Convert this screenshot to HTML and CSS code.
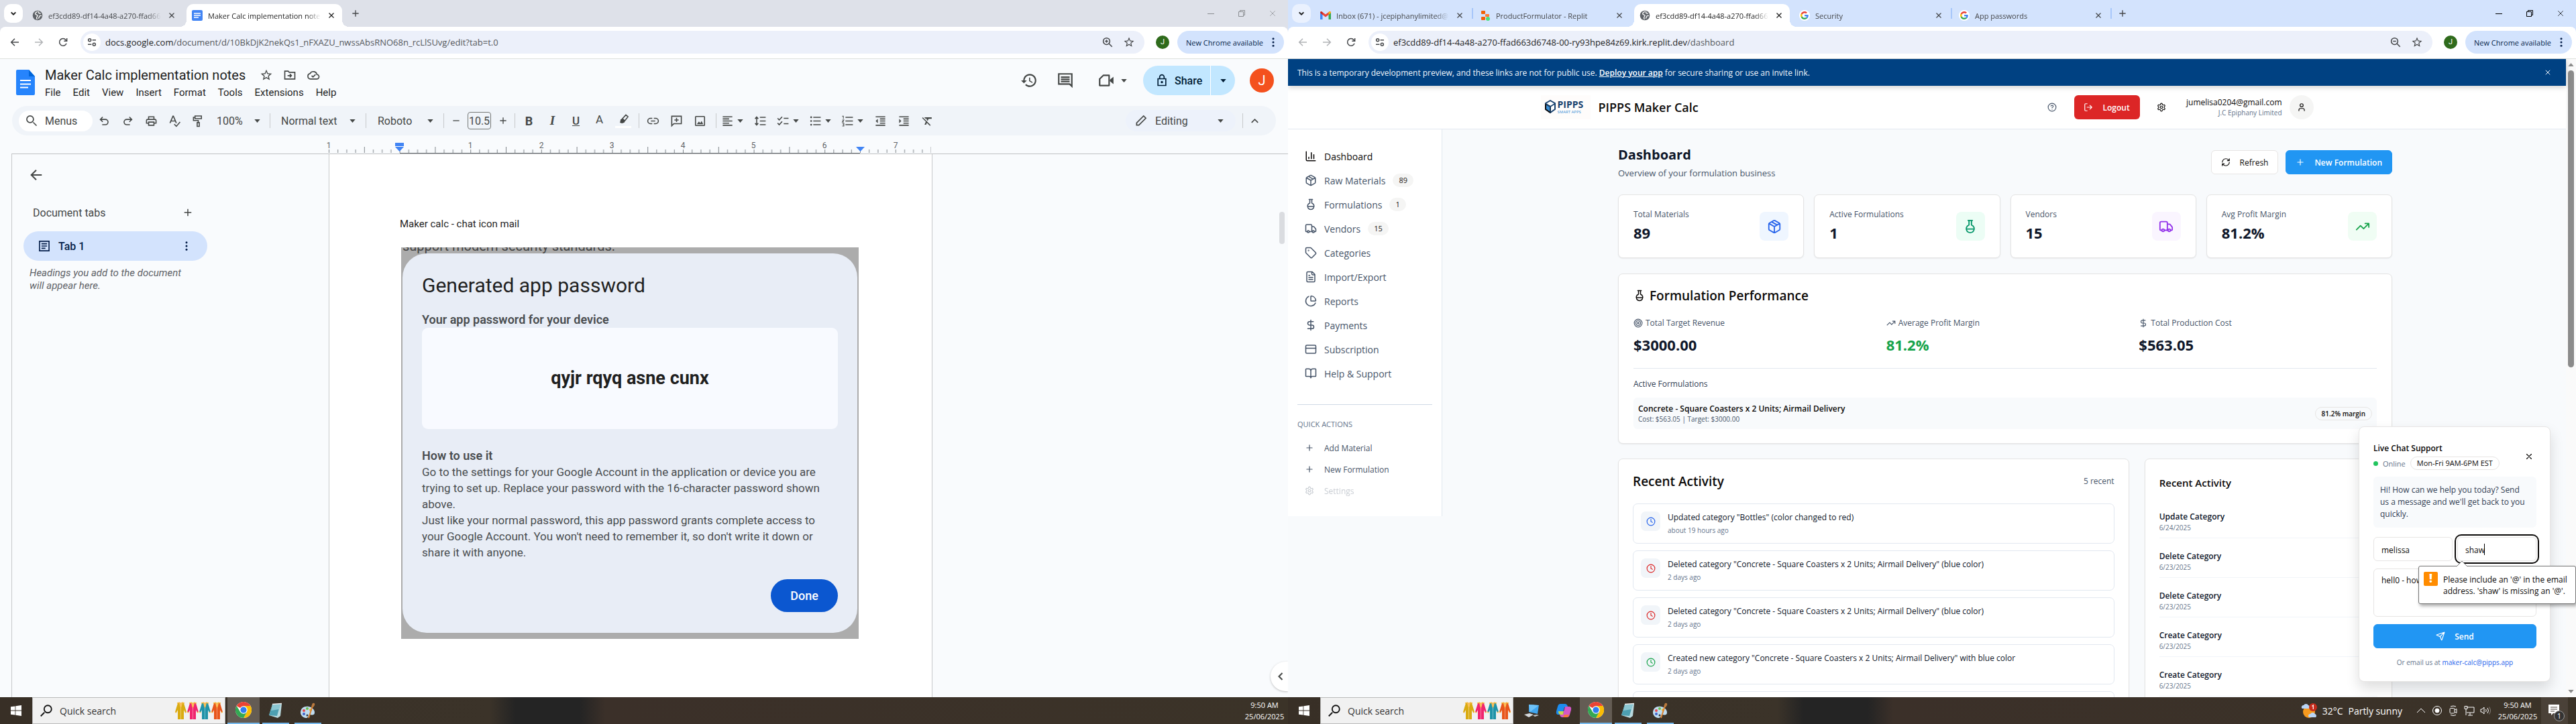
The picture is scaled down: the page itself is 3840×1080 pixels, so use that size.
FILE: index.html
```html
<!DOCTYPE html>
<html lang="en">
<head>
<meta charset="utf-8">
<title>Desktop</title>
<link rel="stylesheet" href="styles.css">
</head>
<body>
<svg class="defs" aria-hidden="true">
  <symbol id="chev-down" viewBox="0 0 24 24"><path d="M7 9.500l5 5 5-5" fill="none" stroke="currentColor" stroke-width="3"/></symbol>
  <symbol id="close" viewBox="0 0 24 24"><path d="M5 5l14 14M19 5L5 19" fill="none" stroke="currentColor" stroke-width="2.500"/></symbol>
  <symbol id="thin-x" viewBox="0 0 24 24"><path d="M3 3l18 18M21 3L3 21" fill="none" stroke="currentColor" stroke-width="1.800"/></symbol>
  <symbol id="plus" viewBox="0 0 24 24"><path d="M5 12h14M12 5v14" fill="none" stroke="currentColor" stroke-width="2"/></symbol>
  <symbol id="minus" viewBox="0 0 24 24"><path d="M5 12h14" fill="none" stroke="currentColor" stroke-width="2"/></symbol>
  <symbol id="win-min" viewBox="0 0 10 10"><path d="M0 5.500h10" stroke="currentColor"/></symbol>
  <symbol id="win-restore" viewBox="0 0 10 10"><path d="M.5 2.500h7v7h-7zM2.500 2.500v-2h7v7h-2" fill="none" stroke="currentColor"/></symbol>
  <symbol id="back" viewBox="0 0 24 24"><path d="M21 12H4M12 4l-8 8 8 8" fill="none" stroke="currentColor" stroke-width="2.200"/></symbol>
  <symbol id="forward" viewBox="0 0 24 24"><path d="M3 12h17M12 4l8 8-8 8" fill="none" stroke="currentColor" stroke-width="2.200"/></symbol>
  <symbol id="reload" viewBox="0 0 24 24"><path d="M19.500 14.500A8 8 0 1 1 18 6.700L20 9M20.500 3v6.500H14" fill="none" stroke="currentColor" stroke-width="2.300"/></symbol>
  <symbol id="site" viewBox="0 0 24 24"><g fill="none" stroke="currentColor" stroke-width="2.300"><circle cx="7" cy="7" r="3"/><path d="M13 7h8M3 17h8"/><circle cx="17" cy="17" r="3"/></g></symbol>
  <symbol id="zoom-in" viewBox="0 0 24 24"><g fill="none" stroke="currentColor" stroke-width="2"><circle cx="10" cy="10" r="6.500"/><path d="M15 15l6 6M7 10h6M10 7v6"/></g></symbol>
  <symbol id="zoom-out" viewBox="0 0 24 24"><g fill="none" stroke="currentColor" stroke-width="2"><circle cx="10" cy="10" r="6.500"/><path d="M15 15l6 6M7 10h6"/></g></symbol>
  <symbol id="star" viewBox="0 0 24 24"><path fill="currentColor" d="M22 9.240l-7.190-.62L12 2 9.190 8.630 2 9.240l5.460 4.730L5.820 21 12 17.270 18.180 21l-1.630-7.030L22 9.240zM12 15.400l-3.760 2.270 1-4.280-3.320-2.880 4.380-.38L12 6.100l1.710 4.040 4.380.38-3.320 2.880 1 4.280L12 15.400z"/></symbol>
  <symbol id="dots" viewBox="0 0 24 24"><g fill="currentColor"><circle cx="12" cy="5" r="2"/><circle cx="12" cy="12" r="2"/><circle cx="12" cy="19" r="2"/></g></symbol>
  <symbol id="globe" viewBox="0 0 24 24"><circle cx="12" cy="12" r="11" fill="#5f6368"/><path d="M12 3c-1 2-5 2-5 5s4 2 5 4-3 3-2 6l1 3M14 3l1 4 4 1M21 13c-3-1-5 0-5 2l-2 4" fill="none" stroke="#fff" stroke-width="2"/></symbol>
  <symbol id="docs-fav" viewBox="0 0 16 16"><rect width="16" height="16" rx="2" fill="#4285f4"/><path d="M3 5h10M3 8h10M3 11h7" stroke="#fff" stroke-width="1.500"/></symbol>
  <symbol id="gmail" viewBox="0 0 16 16"><path d="M0 14V3.500L3.500 6v8z" fill="#4285f4"/><path d="M16 14V3.500L12.500 6v8z" fill="#34a853"/><path d="M0 4q0-2 2-2l6 4.600L14 2q2 0 2 2L12.500 7 8 10.500 3.500 7z" fill="#ea4335"/><path d="M12.500 3.200Q16 .8 16 4l-3.500 3z" fill="#fbbc04"/><path d="M3.500 3.200Q0 .8 0 4l3.500 3z" fill="#c5221f"/></symbol>
  <symbol id="replit" viewBox="0 0 16 16"><rect x="2" y="1" width="6" height="5" rx="1" fill="#f26207"/><rect x="8" y="6" width="6" height="4" rx="1" fill="#ff7b33"/><rect x="2" y="10" width="6" height="5" rx="1" fill="#f26207"/><circle cx="12" cy="13" r="3" fill="#4ade80"/></symbol>
  <symbol id="google" viewBox="0 0 48 48"><path fill="#ea4335" d="M24 9.500c3.540 0 6.710 1.220 9.210 3.600l6.850-6.850C35.900 2.380 30.470 0 24 0 14.620 0 6.510 5.380 2.560 13.220l7.980 6.190C12.430 13.720 17.740 9.500 24 9.500z"/><path fill="#4285f4" d="M46.980 24.550c0-1.570-.15-3.090-.38-4.550H24v9.020h12.940c-.58 2.960-2.260 5.480-4.780 7.180l7.730 6c4.510-4.180 7.090-10.360 7.090-17.650z"/><path fill="#fbbc05" d="M10.530 28.590c-.48-1.450-.76-2.990-.76-4.590s.27-3.140.76-4.590l-7.980-6.190C.92 16.460 0 20.120 0 24c0 3.880.92 7.540 2.560 10.780l7.970-6.190z"/><path fill="#34a853" d="M24 48c6.480 0 11.930-2.130 15.890-5.810l-7.730-6c-2.150 1.450-4.920 2.300-8.160 2.300-6.260 0-11.570-4.220-13.470-9.910l-7.980 6.190C6.510 42.620 14.620 48 24 48z"/></symbol>

  <symbol id="docs-logo" viewBox="0 0 28 38"><path d="M2 0h17l9 10v26q0 2-2 2H2q-2 0-2-2V2q0-2 2-2z" fill="#2684fc"/><path d="M19 0l9 10h-9z" fill="#0066da"/><path d="M6 16h16M6 21.500h16M6 26.500h12" stroke="#fff" stroke-width="2.200"/></symbol>
  <symbol id="move" viewBox="0 0 24 24"><path d="M3 5h6l2 2h10v12H3zM8 13h7M12 10l3 3-3 3" fill="none" stroke="currentColor" stroke-width="2"/></symbol>
  <symbol id="cloud" viewBox="0 0 24 24"><path d="M7 19a5 5 0 0 1-.6-9.900A6.500 6.500 0 0 1 18.500 11 4 4 0 0 1 18 19zM9 13l2.500 2.500L16 11" fill="none" stroke="currentColor" stroke-width="2"/></symbol>
  <symbol id="history" viewBox="0 0 24 24"><path fill="currentColor" d="M13 3c-4.970 0-9 4.030-9 9H1l3.890 3.890.07.14L9 12H6c0-3.870 3.130-7 7-7s7 3.130 7 7-3.130 7-7 7c-1.930 0-3.680-.79-4.940-2.060l-1.420 1.420C8.270 19.990 10.510 21 13 21c4.970 0 9-4.030 9-9s-4.030-9-9-9zm-1 5v5l4.280 2.540.72-1.210-3.500-2.080V8H12z"/></symbol>
  <symbol id="comment" viewBox="0 0 24 24"><path d="M3 3h18v17l-3-3H3zM6 7.500h12M6 10.500h12M6 13.500h12" fill="none" stroke="currentColor" stroke-width="2"/></symbol>
  <symbol id="video" viewBox="0 0 24 24"><path d="M8 5h8v14H3V10z" fill="none" stroke="currentColor" stroke-width="2" stroke-linejoin="round"/><path d="M17 11l5-4v10l-5-4z" fill="currentColor"/></symbol>
  <symbol id="lock" viewBox="0 0 24 24"><path d="M5 9h14v12H5zM8 9V6a4 4 0 0 1 8 0v3" fill="none" stroke="currentColor" stroke-width="2"/><circle cx="12" cy="15" r="2" fill="currentColor"/></symbol>
  <symbol id="caret" viewBox="0 0 10 6"><path d="M0 0h10L5 6z" fill="currentColor"/></symbol>
  <symbol id="search" viewBox="0 0 24 24"><path d="M15 15l6 6" fill="none" stroke="currentColor" stroke-width="2"/><circle cx="9.500" cy="9.500" r="6" fill="none" stroke="currentColor" stroke-width="2"/></symbol>
  <symbol id="undo" viewBox="0 0 24 24"><path d="M8 19h6a5 5 0 0 0 0-10H5M9 4.500L4.500 9 9 13.500" fill="none" stroke="currentColor" stroke-width="2"/></symbol>
  <symbol id="redo" viewBox="0 0 24 24"><path d="M16 19h-6a5 5 0 0 1 0-10h9M15 4.500L19.500 9 15 13.500" fill="none" stroke="currentColor" stroke-width="2"/></symbol>
  <symbol id="print" viewBox="0 0 24 24"><path fill="currentColor" d="M19 8h-1V3H6v5H5c-1.660 0-3 1.340-3 3v6h4v4h12v-4h4v-6c0-1.660-1.340-3-3-3zM8 5h8v3H8V5zm8 14H8v-4h8v4zm2-4v-2H6v2H4v-4c0-.55.45-1 1-1h14c.55 0 1 .45 1 1v4h-2z"/></symbol>
  <symbol id="spell" viewBox="0 0 24 24"><path d="M3 16L8.500 3h1L15 16M5 12h8M11 18l4 4 7-8" fill="none" stroke="currentColor" stroke-width="2"/></symbol>
  <symbol id="paint" viewBox="0 0 24 24"><path d="M6 2.500h12v5H6zM6 5H3v6h9v4M10 15h4v7h-4z" fill="none" stroke="currentColor" stroke-width="2"/></symbol>
  <symbol id="pen" viewBox="0 0 24 24"><path d="M8 13L17 3l4 3.500-8 10zM8 13l5 3.500-3 1.500-3-1z" fill="none" stroke="currentColor" stroke-width="2"/><path d="M8 13l3-4 4 4-2 4-5 1z" fill="currentColor"/></symbol>
  <symbol id="link" viewBox="0 0 24 24"><path d="M10.500 7H7a5 5 0 0 0 0 10h3.500M13.500 7H17a5 5 0 0 1 0 10h-3.500M8 12h8" fill="none" stroke="currentColor" stroke-width="2"/></symbol>
  <symbol id="add-comment" viewBox="0 0 24 24"><path d="M3 3h18v14H7l-4 4zM8 10h8M12 6v8" fill="none" stroke="currentColor" stroke-width="2"/></symbol>
  <symbol id="image" viewBox="0 0 24 24"><rect x="3.500" y="3.500" width="17" height="17" rx="1" fill="none" stroke="currentColor" stroke-width="2"/><path d="M6 18l4-5 2.500 3 2.500-4 3 6z" fill="currentColor"/></symbol>
  <symbol id="align" viewBox="0 0 24 24"><path d="M3 4h18M3 8h12M3 12h18M3 16h12M3 20h18" stroke="currentColor" stroke-width="2"/></symbol>
  <symbol id="spacing" viewBox="0 0 24 24"><path d="M11 5h11M11 12h11M11 19h11M5 5v14M2 8l3-3.500L8 8M2 16l3 3.500L8 16" fill="none" stroke="currentColor" stroke-width="2"/></symbol>
  <symbol id="checklist" viewBox="0 0 24 24"><path d="M1.500 7l3 3L10 4M1.500 16l3 3L10 13M13 7h9M13 17h9" fill="none" stroke="currentColor" stroke-width="2"/></symbol>
  <symbol id="bullets" viewBox="0 0 24 24"><path d="M8 5h14M8 12h14M8 19h14" stroke="currentColor" stroke-width="2"/><circle cx="4" cy="5" r="1.700"/><circle cx="4" cy="12" r="1.700"/><circle cx="4" cy="19" r="1.700"/></symbol>
  <symbol id="numbers" viewBox="0 0 24 24"><path d="M8 5h14M8 12h14M8 19h14" stroke="currentColor" stroke-width="2"/><path d="M2 3h2v5M2 10h3l-3 4h3M2 16.500h3v5H2M3 19h2" fill="none" stroke="currentColor" stroke-width="1.300"/></symbol>
  <symbol id="outdent" viewBox="0 0 24 24"><path d="M3 4h18M11 8h10M11 12h10M11 16h10M3 20h18" stroke="currentColor" stroke-width="2"/><path d="M7 8v8l-4-4z"/></symbol>
  <symbol id="indent" viewBox="0 0 24 24"><path d="M3 4h18M11 8h10M11 12h10M11 16h10M3 20h18" stroke="currentColor" stroke-width="2"/><path d="M3 8v8l4-4z"/></symbol>
  <symbol id="clear" viewBox="0 0 24 24"><path fill="currentColor" d="M3.270 5L2 6.270l6.970 6.970L6.500 19h3l1.570-3.660L16.730 21 18 19.730 3.550 5.270 3.270 5zM6 5v.18L8.820 8h2.400l-.72 1.680 2.100 2.100L14.210 8H20V5H6z"/></symbol>
  <symbol id="pencil" viewBox="0 0 24 24"><path d="M4 20v-4L16.500 3.500l4 4L8 20z" fill="none" stroke="currentColor" stroke-width="2"/></symbol>
  <symbol id="chev-up" viewBox="0 0 24 24"><path d="M6 15l6-6 6 6" fill="none" stroke="currentColor" stroke-width="2"/></symbol>
  <symbol id="chev-left" viewBox="0 0 24 24"><path d="M15 6l-6 6 6 6" fill="none" stroke="currentColor" stroke-width="2.500"/></symbol>
  <symbol id="tab-doc" viewBox="0 0 24 24"><path d="M3.500 3.500h17v17h-17zM7 8h10M7 12h10M7 16h7" fill="none" stroke="currentColor" stroke-width="2"/></symbol>

  <symbol id="chart" viewBox="0 0 24 24"><path d="M3 3v16a2 2 0 0 0 2 2h16M18 17V9M13 17V5M8 17v-3"/></symbol>
  <symbol id="package" viewBox="0 0 24 24"><path d="m7.500 4.270 9 5.150M21 8a2 2 0 0 0-1-1.730l-7-4a2 2 0 0 0-2 0l-7 4A2 2 0 0 0 3 8v8a2 2 0 0 0 1 1.730l7 4a2 2 0 0 0 2 0l7-4A2 2 0 0 0 21 16ZM3.300 7l8.700 5 8.700-5M12 22V12"/></symbol>
  <symbol id="flask" viewBox="0 0 24 24"><path d="M10 2v7.310M14 9.300V2M8.500 2h7M14 9.300a6.500 6.500 0 1 1-4 0M5.520 16h12.960"/></symbol>
  <symbol id="truck" viewBox="0 0 24 24"><path d="M14 18V6a2 2 0 0 0-2-2H4a2 2 0 0 0-2 2v11a1 1 0 0 0 1 1h2M15 18H9M19 18h2a1 1 0 0 0 1-1v-3.650a1 1 0 0 0-.22-.62l-3.480-4.350A1 1 0 0 0 17.520 8H14"/><circle cx="17" cy="18" r="2"/><circle cx="7" cy="18" r="2"/></symbol>
  <symbol id="tag" viewBox="0 0 24 24"><path d="M12.590 2.590A2 2 0 0 0 11.170 2H4a2 2 0 0 0-2 2v7.170a2 2 0 0 0 .59 1.420l8.700 8.700a2.430 2.430 0 0 0 3.420 0l6.580-6.580a2.430 2.430 0 0 0 0-3.420z"/><circle cx="7.500" cy="7.500" r=".5"/></symbol>
  <symbol id="file" viewBox="0 0 24 24"><path d="M15 2H6a2 2 0 0 0-2 2v16a2 2 0 0 0 2 2h12a2 2 0 0 0 2-2V7ZM14 2v4a2 2 0 0 0 2 2h4M10 9H8M16 13H8M16 17H8"/></symbol>
  <symbol id="pie" viewBox="0 0 24 24"><path d="M21 12c.55 0 1-.45.95-1a10 10 0 0 0-8.950-8.950C12.450 2 12 2.450 12 3v8a1 1 0 0 0 1 1zM21.210 15.890A10 10 0 1 1 8 2.830"/></symbol>
  <symbol id="dollar" viewBox="0 0 24 24"><path d="M12 2v20M17 5H9.500a3.500 3.500 0 0 0 0 7h5a3.500 3.500 0 0 1 0 7H6"/></symbol>
  <symbol id="card" viewBox="0 0 24 24"><rect width="20" height="16" x="2" y="4" rx="2"/><path d="M2 10h20"/></symbol>
  <symbol id="book" viewBox="0 0 24 24"><path d="M12 7v14M3 18a1 1 0 0 1-1-1V4a1 1 0 0 1 1-1h5a4 4 0 0 1 4 4 4 4 0 0 1 4-4h5a1 1 0 0 1 1 1v13a1 1 0 0 1-1 1h-6a3 3 0 0 0-3 3 3 3 0 0 0-3-3z"/></symbol>
  <symbol id="lplus" viewBox="0 0 24 24"><path d="M5 12h14M12 5v14"/></symbol>
  <symbol id="gear" viewBox="0 0 24 24"><path d="M12.220 2h-.44a2 2 0 0 0-2 2v.18a2 2 0 0 1-1 1.730l-.43.25a2 2 0 0 1-2 0l-.15-.08a2 2 0 0 0-2.730.73l-.22.38a2 2 0 0 0 .73 2.730l.15.1a2 2 0 0 1 1 1.720v.51a2 2 0 0 1-1 1.740l-.15.09a2 2 0 0 0-.73 2.730l.22.38a2 2 0 0 0 2.730.73l.15-.08a2 2 0 0 1 2 0l.43.25a2 2 0 0 1 1 1.730V20a2 2 0 0 0 2 2h.44a2 2 0 0 0 2-2v-.18a2 2 0 0 1 1-1.730l.43-.25a2 2 0 0 1 2 0l.15.08a2 2 0 0 0 2.730-.73l.22-.39a2 2 0 0 0-.73-2.730l-.15-.08a2 2 0 0 1-1-1.740v-.5a2 2 0 0 1 1-1.740l.15-.09a2 2 0 0 0 .73-2.730l-.22-.38a2 2 0 0 0-2.730-.73l-.15.08a2 2 0 0 1-2 0l-.43-.25a2 2 0 0 1-1-1.730V4a2 2 0 0 0-2-2z"/><circle cx="12" cy="12" r="3"/></symbol>
  <symbol id="help" viewBox="0 0 24 24"><circle cx="12" cy="12" r="10"/><path d="M9.090 9a3 3 0 0 1 5.830 1c0 2-3 3-3 3M12 17h.01"/></symbol>
  <symbol id="logout" viewBox="0 0 24 24"><path d="M9 21H5a2 2 0 0 1-2-2V5a2 2 0 0 1 2-2h4M16 17l5-5-5-5M21 12H9"/></symbol>
  <symbol id="user" viewBox="0 0 24 24"><path d="M19 21v-2a4 4 0 0 0-4-4H9a4 4 0 0 0-4 4v2"/><circle cx="12" cy="7" r="4"/></symbol>
  <symbol id="refresh" viewBox="0 0 24 24"><path d="M3 12a9 9 0 0 1 9-9 9.750 9.750 0 0 1 6.740 2.740L21 8M21 3v5h-5M21 12a9 9 0 0 1-9 9 9.750 9.750 0 0 1-6.740-2.740L3 16M8 16H3v5"/></symbol>
  <symbol id="trend" viewBox="0 0 24 24"><path d="M22 7l-8.500 8.500-5-5L2 17M16 7h6v6"/></symbol>
  <symbol id="target" viewBox="0 0 24 24"><circle cx="12" cy="12" r="10"/><circle cx="12" cy="12" r="6"/><circle cx="12" cy="12" r="2"/></symbol>
  <symbol id="clock" viewBox="0 0 24 24"><circle cx="12" cy="12" r="10"/><path d="M12 6v6l4 2"/></symbol>
  <symbol id="send" viewBox="0 0 24 24"><path d="M14.540 21.690a.5.5 0 0 0 .94-.02l6.500-19a.5.5 0 0 0-.64-.64l-19 6.500a.5.5 0 0 0-.02.94l7.930 3.180a2 2 0 0 1 1.110 1.110zM21.850 2.150l-10.940 10.940"/></symbol>
  <symbol id="lx" viewBox="0 0 24 24"><path d="M18 6L6 18M6 6l12 12"/></symbol>

  <symbol id="windows" viewBox="0 0 16 16"><path fill="#fff" d="M0 2.300l6.500-.9v6.200H0zM7.300 1.300L16 0v7.600H7.300zM0 8.400h6.500v6.200L0 13.700zM7.300 8.400H16V16l-8.700-1.300z"/></symbol>
  <symbol id="coat" viewBox="0 0 17 27"><path d="M4 2l3-1h3l3 1 4 13-2 1-2-4v14H4V12l-2 4-2-1z" fill="currentColor"/><path d="M6 1h5l-1 5-1.500 4L7 6z" fill="#fbbf5a"/><path d="M8.500 9v17" stroke="#fff" stroke-opacity=".4"/><path d="M3 2l4-1M10 1l4 1M0 15l2 1M15 16l2-1" stroke="#f5b83d" stroke-width="1.500"/></symbol>
  <symbol id="chrome" viewBox="0 0 24 24"><circle cx="12" cy="12" r="12" fill="#fff"/><path d="M12 12L1.600 6A12 12 0 0 1 22.400 6z" fill="#ea4335"/><path d="M12 6h10.400A12 12 0 0 1 12 24l5-9z" fill="#fbbc04"/><path d="M1.600 6A12 12 0 0 0 12 24l5-9-5 2.500-5-3z" fill="#34a853"/><circle cx="12" cy="12" r="5.800" fill="#fff"/><circle cx="12" cy="12" r="4.600" fill="#2f7df0"/></symbol>
  <symbol id="notepad" viewBox="0 0 24 24"><path d="M7 3l14-1-2 18-4 3-13-4z" fill="#b9d9de"/><path d="M7 3l12-1-5 18-12-1z" fill="#4d9fb1"/><path d="M7 3l12-1-2 8-12 2z" fill="#8bc7d2"/><path d="M7 2.500l14-1" stroke="#eee" stroke-width="1.500"/></symbol>
  <symbol id="palette" viewBox="0 0 24 24"><path d="M1 15C1 8 7 5 13 6s9 5 9 9-4 4-6 3-3 5-7 5-8-4-8-8z" fill="#bfdcf0"/><circle cx="6" cy="12" r="2" fill="#e5484d"/><circle cx="11" cy="9" r="2" fill="#6cbf4a"/><circle cx="16" cy="11" r="2" fill="#f2b632"/><circle cx="6" cy="17" r="2" fill="#4263c9"/><circle cx="11" cy="19" r="1.500" fill="#333"/><path d="M20 2l-7 21" stroke="#d98232" stroke-width="2"/><path d="M19 1q4-1 3 3l-2 3-3-1z" fill="#b9793e"/></symbol>
  <symbol id="pc" viewBox="0 0 24 24"><path d="M8 3l15 1-2 13-13-3z" fill="#41a5ee"/><path d="M8 3l15 1-13 10z" fill="#6fc2f7"/><path d="M1 18l8-2 6 2-7 4z" fill="#d5d9dd"/><path d="M14 19l6-1 3 1-6 2z" fill="#c0c4c8"/></symbol>
  <symbol id="copilot" viewBox="0 0 24 24"><path d="M7 2h7q3 0 4 4l-5 1-3 11H4q-4 0-3-5l2-7q1-4 4-4z" fill="#1c8df0"/><path d="M17 22h-7q-3 0-4-4l5-1 3-11h6q4 0 3 5l-2 7q-1 4-4 4z" fill="#d457c8"/><path d="M4 13q0 5 4 5h3l1-5z" fill="#c7d64c"/><path d="M13 18h7q-1 4-4 4h-5z" fill="#f6743d"/></symbol>
</svg>

<div class="desktop">
  <section class="screen">
    <div class="window">
      <div class="tabstrip tabstrip-idle">
        <button class="tab-search" aria-label="Search tabs"><svg class="i12"><use href="#chev-down"/></svg></button>
        <div class="tab"><svg class="i16"><use href="#globe"/></svg><span class="tab-title">ef3cdd89-df14-4a48-a270-ffad663d</span><button class="tab-x" aria-label="Close"><svg class="i12"><use href="#close"/></svg></button></div>
        <span class="tab-gap"></span>
        <div class="tab tab-active"><svg class="i16"><use href="#docs-fav"/></svg><span class="tab-title">Maker Calc implementation notes</span><button class="tab-x" aria-label="Close"><svg class="i12"><use href="#close"/></svg></button></div>
        <button class="tab-new" aria-label="New tab"><svg class="i16"><use href="#plus"/></svg></button>
        <div class="win-ctl win-ctl-idle"><svg><use href="#win-min"/></svg><svg><use href="#win-restore"/></svg><svg><use href="#thin-x"/></svg></div>
      </div>
      <div class="navwrap tabstrip-idle"><div class="navbar">
        <button class="nav-btn" aria-label="Back"><svg class="i16"><use href="#back"/></svg></button>
        <button class="nav-btn nav-off" aria-label="Forward"><svg class="i16"><use href="#forward"/></svg></button>
        <button class="nav-btn" aria-label="Reload"><svg class="i16"><use href="#reload"/></svg></button>
        <div class="omnibox"><span class="site"><svg class="i16"><use href="#site"/></svg></span><span class="url">docs.google.com<span class="dim">/document/d/10BkDjK2nekQs1_nFXAZU_nwssAbsRNO68n_rcLlSUvg/edit?tab=t.0</span></span><svg class="i18"><use href="#zoom-in"/></svg><svg class="i18"><use href="#star"/></svg></div>
        <span class="avatar-s">J</span>
        <button class="update">New Chrome available<svg class="i18"><use href="#dots"/></svg></button>
      </div></div>

      <div class="docs">
        <header class="docs-head">
          <svg class="docs-logo"><use href="#docs-logo"/></svg>
          <div class="docs-titles">
            <div class="docs-title"><span>Maker Calc implementation notes</span><svg class="i20"><use href="#star"/></svg><svg class="i20"><use href="#move"/></svg><svg class="i20"><use href="#cloud"/></svg></div>
            <nav class="docs-menu"><button>File</button><button>Edit</button><button>View</button><button>Insert</button><button>Format</button><button>Tools</button><button>Extensions</button><button>Help</button></nav>
          </div>
          <div class="docs-actions">
            <button aria-label="History"><svg class="i26"><use href="#history"/></svg></button>
            <button aria-label="Comments"><svg class="i26"><use href="#comment"/></svg></button>
            <button class="meet" aria-label="Meet"><svg class="i26"><use href="#video"/></svg><svg class="caret"><use href="#caret"/></svg></button>
            <div class="share"><button class="share-main"><svg class="i20"><use href="#lock"/></svg>Share</button><button class="share-more" aria-label="Share options"><svg class="caret"><use href="#caret"/></svg></button></div>
            <span class="avatar-l">J</span>
          </div>
        </header>
        <div class="tools">
          <button class="menus"><svg class="i20"><use href="#search"/></svg>Menus</button>
          <button class="tool" aria-label="Undo"><svg><use href="#undo"/></svg></button>
          <button class="tool" aria-label="Redo"><svg><use href="#redo"/></svg></button>
          <button class="tool" aria-label="Print"><svg><use href="#print"/></svg></button>
          <button class="tool" aria-label="Spelling"><svg><use href="#spell"/></svg></button>
          <button class="tool" aria-label="Paint format"><svg><use href="#paint"/></svg></button>
          <button class="pick pick-zoom">100%<svg class="caret"><use href="#caret"/></svg></button>
          <i class="sep"></i>
          <button class="pick pick-style">Normal text<svg class="caret"><use href="#caret"/></svg></button>
          <i class="sep"></i>
          <button class="pick pick-font">Roboto<svg class="caret"><use href="#caret"/></svg></button>
          <i class="sep"></i>
          <button class="tool" aria-label="Smaller"><svg class="i16"><use href="#minus"/></svg></button>
          <input class="size" value="10.5" aria-label="Font size">
          <button class="tool" aria-label="Larger"><svg class="i16"><use href="#plus"/></svg></button>
          <i class="sep"></i>
          <div class="group">
            <button class="tool t-b">B</button><button class="tool t-i">I</button><button class="tool t-u">U</button><button class="tool t-a">A</button><button class="tool t-pen" aria-label="Highlight"><svg><use href="#pen"/></svg></button>
          </div>
          <i class="sep"></i>
          <div class="group">
            <button class="tool" aria-label="Link"><svg><use href="#link"/></svg></button><button class="tool" aria-label="Comment"><svg><use href="#add-comment"/></svg></button><button class="tool" aria-label="Image"><svg><use href="#image"/></svg></button>
          </div>
          <i class="sep"></i>
          <button class="tool drop" aria-label="Align"><svg><use href="#align"/></svg><svg class="caret"><use href="#caret"/></svg></button>
          <button class="tool" aria-label="Line spacing"><svg><use href="#spacing"/></svg></button>
          <button class="tool drop" aria-label="Checklist"><svg><use href="#checklist"/></svg><svg class="caret"><use href="#caret"/></svg></button>
          <button class="tool drop" aria-label="Bullets"><svg><use href="#bullets"/></svg><svg class="caret"><use href="#caret"/></svg></button>
          <button class="tool drop" aria-label="Numbering"><svg><use href="#numbers"/></svg><svg class="caret"><use href="#caret"/></svg></button>
          <button class="tool" aria-label="Outdent"><svg><use href="#outdent"/></svg></button>
          <button class="tool" aria-label="Indent"><svg><use href="#indent"/></svg></button>
          <button class="tool" aria-label="Clear formatting"><svg><use href="#clear"/></svg></button>
          <button class="editing"><svg class="i20"><use href="#pencil"/></svg><span>Editing</span><svg class="caret"><use href="#caret"/></svg></button>
          <i class="sep"></i>
          <button class="tool" aria-label="Hide menus"><svg class="i20"><use href="#chev-up"/></svg></button>
        </div>

        <div class="ruler">
          <svg class="ruler-scale" viewBox="0 0 912 19">
            <defs><pattern id="inch" x="6" y="0" width="105.600" height="19" patternUnits="userSpaceOnUse"><path d="M.5 13v5M13.700 13v5M26.900 13v5M40.100 13v5M53.300 9v9M66.500 13v5M79.700 13v5M92.900 13v5" stroke="#80868b"/></pattern></defs>
            <rect x="6" width="898" height="19" fill="url(#inch)"/>
            <g class="ruler-num"><text x="6" y="11">1</text><text x="217" y="11">1</text><text x="323" y="11">2</text><text x="428" y="11">3</text><text x="534" y="11">4</text><text x="639" y="11">5</text><text x="745" y="11">6</text><text x="851" y="11">7</text></g>
            <path d="M112 18.500h686" stroke="#6b6f73"/>
            <path d="M105 3h13v5h-13zM105 9h13l-6.500 7zM792 9h13l-6.500 7z" fill="#4285f4"/>
          </svg>
        </div>
        <div class="canvas">
          <aside class="outline">
            <button class="outline-back" aria-label="Close outline"><svg class="i22"><use href="#back"/></svg></button>
            <div class="outline-head"><span>Document tabs</span><svg class="i18"><use href="#plus"/></svg></div>
            <div class="outline-tab"><svg class="i20"><use href="#tab-doc"/></svg><span>Tab 1</span><svg class="i18"><use href="#dots"/></svg></div>
            <p>Headings you add to the document will appear here.</p>
          </aside>
          <article class="page">
            <p class="page-text">Maker calc - chat icon mail</p>
            <div class="shot">
              <div class="shot-top"><span>support modern security standards.</span></div>
              <div class="pw">
                <h2>Generated app password</h2>
                <h3>Your app password for your device</h3>
                <div class="pw-box">qyjr rqyq asne cunx</div>
                <h3>How to use it</h3>
                <p>Go to the settings for your Google Account in the application or device you are<br>trying to set up. Replace your password with the 16-character password shown<br>above.</p>
                <p>Just like your normal password, this app password grants complete access to<br>your Google Account. You won't need to remember it, so don't write it down or<br>share it with anyone.</p>
                <button class="pw-done">Done</button>
              </div>
            </div>
          </article>
          <div class="side-scroll"><span class="side-thumb"></span><button class="side-toggle" aria-label="Show side panel"><svg class="i20"><use href="#chev-left"/></svg></button></div>
        </div>
      </div>
    </div>

    <footer class="taskbar">
      <button class="start" aria-label="Start"><svg class="i16"><use href="#windows"/></svg></button>
      <label class="tsearch"><svg class="i22 flip"><use href="#search"/></svg><input placeholder="Quick search" aria-label="Quick search"><span class="coats"><svg class="c1"><use href="#coat"/></svg><svg class="c2"><use href="#coat"/></svg><svg class="c3"><use href="#coat"/></svg><svg class="c4"><use href="#coat"/></svg></span></label>
      <button class="app app-on" aria-label="Chrome"><svg class="i24"><use href="#chrome"/></svg></button>
      <button class="app app-run" aria-label="Notepad"><svg class="i24"><use href="#notepad"/></svg></button>
      <button class="app app-run" aria-label="Paint"><svg class="i24"><use href="#palette"/></svg></button>
      <div class="tray"><div class="tclock"><span>9:50 AM</span><span>25/06/2025</span></div></div>
    </footer>
  </section>

  <section class="screen">
    <div class="window">
      <div class="tabstrip">
        <button class="tab-search" aria-label="Search tabs"><svg class="i12"><use href="#chev-down"/></svg></button>
        <div class="tab"><svg class="i16"><use href="#gmail"/></svg><span class="tab-title">Inbox (671) - jcepiphanylimited@gmail</span><button class="tab-x" aria-label="Close"><svg class="i12"><use href="#close"/></svg></button></div>
        <span class="tab-gap tab-sep"></span>
        <div class="tab"><svg class="i16"><use href="#replit"/></svg><span class="tab-title">ProductFormulator - Replit</span><button class="tab-x" aria-label="Close"><svg class="i12"><use href="#close"/></svg></button></div>
        <span class="tab-gap"></span>
        <div class="tab tab-active"><svg class="i16"><use href="#globe"/></svg><span class="tab-title">ef3cdd89-df14-4a48-a270-ffad663d</span><button class="tab-x" aria-label="Close"><svg class="i12"><use href="#close"/></svg></button></div>
        <span class="tab-gap"></span>
        <div class="tab"><span class="gfav"><svg><use href="#google"/></svg></span><span class="tab-title">Security</span><button class="tab-x" aria-label="Close"><svg class="i12"><use href="#close"/></svg></button></div>
        <span class="tab-gap tab-sep"></span>
        <div class="tab"><span class="gfav"><svg><use href="#google"/></svg></span><span class="tab-title">App passwords</span><button class="tab-x" aria-label="Close"><svg class="i12"><use href="#close"/></svg></button></div>
        <span class="tab-gap tab-sep"></span>
        <button class="tab-new" aria-label="New tab"><svg class="i16"><use href="#plus"/></svg></button>
        <div class="win-ctl"><svg><use href="#win-min"/></svg><svg><use href="#win-restore"/></svg><svg><use href="#thin-x"/></svg></div>
      </div>
      <div class="navwrap"><div class="navbar">
        <button class="nav-btn nav-off" aria-label="Back"><svg class="i16"><use href="#back"/></svg></button>
        <button class="nav-btn nav-off" aria-label="Forward"><svg class="i16"><use href="#forward"/></svg></button>
        <button class="nav-btn" aria-label="Reload"><svg class="i16"><use href="#reload"/></svg></button>
        <div class="omnibox"><span class="site"><svg class="i16"><use href="#site"/></svg></span><span class="url">ef3cdd89-df14-4a48-a270-ffad663d6748-00-ry93hpe84z69.kirk.replit.dev<span class="dim">/dashboard</span></span><svg class="i18"><use href="#zoom-out"/></svg><svg class="i18"><use href="#star"/></svg></div>
        <span class="avatar-s">J</span>
        <button class="update">New Chrome available<svg class="i18"><use href="#dots"/></svg></button>
      </div></div>

      <div class="viewport">
        <div class="site-body">
          <div class="banner"><span>This is a temporary development preview, and these links are not for public use. <a href="#deploy">Deploy your app</a> for secure sharing or use an invite link.</span><button aria-label="Dismiss"><svg class="i12"><use href="#lx"/></svg></button></div>
          <header class="top"><div class="top-in">
            <div class="brand">
              <svg class="brand-cube" viewBox="0 0 16 20"><path d="M8 1l7 4v9l-7 5-7-5V5z" fill="#fff" stroke="#17406d" stroke-width="2"/><path d="M1 6l7 4v9l-7-5z" fill="#3b8fd6"/><path d="M1 5.500L8 10l7-4.500M8 10v9" fill="none" stroke="#17406d" stroke-width="1.500"/></svg>
              <span class="brand-text"><b>PIPPS</b><small>SMART APPS</small></span>
            </div>
            <h1>PIPPS Maker Calc</h1>
            <button class="ghost ghost-help" aria-label="Help"><svg class="i14"><use href="#help"/></svg></button>
            <button class="logout"><svg class="i14"><use href="#logout"/></svg>Logout</button>
            <button class="ghost ghost-gear" aria-label="Settings"><svg class="i14"><use href="#gear"/></svg></button>
            <div class="who"><span>jumelisa0204@gmail.com</span><small>J.C Epiphany Limited</small></div>
            <span class="who-pic"><svg class="i14"><use href="#user"/></svg></span>
          </div></header>
          <div class="cols">
            <aside class="side">
              <nav>
                <a class="on" href="#d"><svg class="i18"><use href="#chart"/></svg>Dashboard</a>
                <a href="#r"><svg class="i18"><use href="#package"/></svg>Raw Materials<span class="pill">89</span></a>
                <a href="#f"><svg class="i18"><use href="#flask"/></svg>Formulations<span class="pill">1</span></a>
                <a href="#v"><svg class="i18"><use href="#truck"/></svg>Vendors<span class="pill">15</span></a>
                <a href="#c"><svg class="i18"><use href="#tag"/></svg>Categories</a>
                <a href="#i"><svg class="i18"><use href="#file"/></svg>Import/Export</a>
                <a href="#p"><svg class="i18"><use href="#pie"/></svg>Reports</a>
                <a href="#y"><svg class="i18"><use href="#dollar"/></svg>Payments</a>
                <a href="#s"><svg class="i18"><use href="#card"/></svg>Subscription</a>
                <a href="#h"><svg class="i18"><use href="#book"/></svg>Help &amp; Support</a>
              </nav>
              <div class="quick">
                <h2>QUICK ACTIONS</h2>
                <button><svg class="i14"><use href="#lplus"/></svg>Add Material</button>
                <button><svg class="i14"><use href="#lplus"/></svg>New Formulation</button>
                <button disabled><svg class="i14"><use href="#gear"/></svg>Settings</button>
              </div>
            </aside>
            <main class="main"><div class="main-in">
              <div class="page-head">
                <div><h2>Dashboard</h2><p>Overview of your formulation business</p></div>
                <button class="btn"><svg class="i14"><use href="#refresh"/></svg>Refresh</button>
                <button class="btn btn-primary"><svg class="i14"><use href="#lplus"/></svg>New Formulation</button>
              </div>
              <div class="stats">
                <div class="card stat"><div><span>Total Materials</span><b>89</b></div><i class="ic blue"><svg class="i22"><use href="#package"/></svg></i></div>
                <div class="card stat"><div><span>Active Formulations</span><b>1</b></div><i class="ic emerald"><svg class="i22"><use href="#flask"/></svg></i></div>
                <div class="card stat"><div><span>Vendors</span><b>15</b></div><i class="ic purple"><svg class="i22"><use href="#truck"/></svg></i></div>
                <div class="card stat"><div><span>Avg Profit Margin</span><b>81.2%</b></div><i class="ic green"><svg class="i22"><use href="#trend"/></svg></i></div>
              </div>
              <section class="card perf">
                <h3><svg class="i18"><use href="#flask"/></svg>Formulation Performance</h3>
                <div class="metrics">
                  <div><span><svg class="i14"><use href="#target"/></svg>Total Target Revenue</span><b>$3000.00</b></div>
                  <div><span><svg class="i14"><use href="#trend"/></svg>Average Profit Margin</span><b class="pos">81.2%</b></div>
                  <div><span><svg class="i14"><use href="#dollar"/></svg>Total Production Cost</span><b>$563.05</b></div>
                </div>
                <div class="active-f">
                  <h4>Active Formulations</h4>
                  <div class="frow"><div><b>Concrete - Square Coasters x 2 Units; Airmail Delivery</b><small>Cost: $563.05 | Target: $3000.00</small></div><span class="tagpill">81.2% margin</span></div>
                </div>
              </section>
              <div class="lower">
                <section class="card recent">
                  <header><h3>Recent Activity</h3><span>5 recent</span></header>
                  <ul>
                    <li><i class="clk k-blue"><svg class="i14"><use href="#clock"/></svg></i><div><span>Updated category "Bottles" (color changed to red)</span><small>about 19 hours ago</small></div></li>
                    <li><i class="clk k-red"><svg class="i14"><use href="#clock"/></svg></i><div><span>Deleted category "Concrete - Square Coasters x 2 Units; Airmail Delivery" (blue color)</span><small>2 days ago</small></div></li>
                    <li><i class="clk k-red"><svg class="i14"><use href="#clock"/></svg></i><div><span>Deleted category "Concrete - Square Coasters x 2 Units; Airmail Delivery" (blue color)</span><small>2 days ago</small></div></li>
                    <li><i class="clk k-green"><svg class="i14"><use href="#clock"/></svg></i><div><span>Created new category "Concrete - Square Coasters x 2 Units; Airmail Delivery" with blue color</span><small>2 days ago</small></div></li>
                    <li></li>
                  </ul>
                </section>
                <section class="card log">
                  <h3>Recent Activity</h3>
                  <ul>
                    <li><b>Update Category</b><small>6/24/2025</small></li>
                    <li><b>Delete Category</b><small>6/23/2025</small></li>
                    <li><b>Delete Category</b><small>6/23/2025</small></li>
                    <li><b>Create Category</b><small>6/23/2025</small></li>
                    <li><b>Create Category</b><small>6/23/2025</small></li>
                  </ul>
                </section>
              </div>
            </div></main>
          </div>
        </div>
        <div class="scroll"><svg class="caret caret-up"><use href="#caret"/></svg><span class="scroll-thumb"></span><svg class="caret"><use href="#caret"/></svg></div>

        <form class="chat" onsubmit="return false">
          <div class="chat-head"><div><h3>Live Chat Support</h3><p><i class="dot"></i>Online<span class="tagpill hours">Mon-Fri 9AM-6PM EST</span></p></div><button type="button" class="chat-x" aria-label="Close chat"><svg class="i14"><use href="#lx"/></svg></button></div>
          <p class="chat-msg">Hi! How can we help you today? Send us a message and we'll get back to you quickly.</p>
          <div class="chat-row">
            <input class="field" value="melissa" aria-label="Name">
            <div class="email"><input class="field field-on" value="shaw" aria-label="Email"><i class="text-caret"></i>
              <div class="tip"><svg class="tip-arrow" viewBox="0 0 16 9"><path d="M0 9L8 1l8 8" fill="#fff" stroke="#767676"/></svg><span class="tip-ico">!</span><p>Please include an '@' in the email<br>address. 'shaw' is missing an '@'.</p></div>
            </div>
          </div>
          <textarea class="field area" aria-label="Message">hell0 - how</textarea>
          <button class="btn btn-primary chat-send"><svg class="i14"><use href="#send"/></svg>Send</button>
          <p class="chat-foot">Or email us at <a href="#mail">maker-calc@pipps.app</a></p>
        </form>
      </div>
    </div>

    <footer class="taskbar">
      <button class="start" aria-label="Start"><svg class="i16"><use href="#windows"/></svg></button>
      <label class="tsearch"><svg class="i22 flip"><use href="#search"/></svg><input placeholder="Quick search" aria-label="Quick search"><span class="coats"><svg class="c1"><use href="#coat"/></svg><svg class="c2"><use href="#coat"/></svg><svg class="c3"><use href="#coat"/></svg><svg class="c4"><use href="#coat"/></svg></span></label>
      <button class="app" aria-label="This PC"><svg class="i24"><use href="#pc"/></svg></button>
      <button class="app" aria-label="Copilot"><svg class="i24"><use href="#copilot"/></svg></button>
      <button class="app app-on" aria-label="Chrome"><svg class="i24"><use href="#chrome"/></svg></button>
      <button class="app app-run" aria-label="Notepad"><svg class="i24"><use href="#notepad"/></svg></button>
      <button class="app app-run" aria-label="Paint"><svg class="i24"><use href="#palette"/></svg></button>
      <div class="tray">
        <div class="weather"><svg class="i24" viewBox="0 0 24 24"><circle cx="12" cy="14" r="9" fill="#f79a1e"/><path d="M1 8a3 3 0 0 1 3-4 4 4 0 0 1 7 0 3 3 0 0 1 1 5H3q-2 0-2-1zM11 20a3 3 0 0 1 3-3 4 4 0 0 1 7 0 3 3 0 0 1 1 5h-9q-2 0-2-2z" fill="#b9d4f5"/><circle cx="18" cy="7" r="6" fill="#c42b1c"/><path d="M16.500 5.500L18.300 4v6" fill="none" stroke="#fff" stroke-width="1.200"/></svg><span>32°C</span><span>Partly sunny</span></div>
        <svg class="tico" viewBox="0 0 16 16"><path d="M2 11l6-6 6 6"/></svg>
        <svg class="tico" viewBox="0 0 16 16"><circle cx="8" cy="8" r="6.500"/><circle cx="8" cy="8" r="3" fill="#fff"/></svg>
        <svg class="tico" viewBox="0 0 16 16"><rect x="3" y="4.500" width="7" height="7.500" rx="1.500"/><path d="M10 7l3-1.500v6L10 10M4 2q4-2 8 0M4 14.500q4 2 8 0"/></svg>
        <svg class="tico" viewBox="0 0 16 16"><path d="M4 3h11v8H4M9 11v4M6 15h7M1 1.500h4v4H1zM3 5.500V15"/></svg>
        <svg class="tico" viewBox="0 0 16 16"><path d="M1 6h2l3-3v10l-3-3H1zM8.500 6q1.500 2 0 4M11 4q3 4 0 8"/><path d="M13.500 2.500q4 5.500 0 11" stroke-opacity=".4"/></svg>
        <div class="tclock"><span>9:50 AM</span><span>25/06/2025</span></div>
        <button class="notify" aria-label="Notifications"><svg class="i22" viewBox="0 0 22 22"><path d="M2 2h16v13H9l-3 3v-3H2z" fill="#fff"/><path d="M5 6h10M5 9h10M5 12h6" stroke="#4a4138"/></svg><span>1</span></button>
      </div>
    </footer>
  </section>
</div>
</body>
</html>
```
FILE: styles.css
```css
* { box-sizing: border-box; }
body { margin: 0; font-family: "Open Sans", "Noto Sans", sans-serif; font-size: 12px; color: #0c0a09; overflow: hidden; }
h1, h2, h3, h4, p, ul { margin: 0; padding: 0; font-weight: 400; }
ul { list-style: none; }
button, input, textarea { font: inherit; color: inherit; border: 0; background: none; padding: 0; margin: 0; outline: 0; }
button { display: flex; align-items: center; }
svg { display: block; flex: none; }
i { font-style: normal; }
.defs { position: absolute; width: 0; height: 0; }
.i12 { width: 12px; height: 12px; }
.i14 { width: 14px; height: 14px; }
.i16 { width: 16px; height: 16px; }
.i18 { width: 18px; height: 18px; }
.i20 { width: 20px; height: 20px; }
.i22 { width: 22px; height: 22px; }
.i24 { width: 24px; height: 24px; }
.i26 { width: 26px; height: 26px; }
.caret { width: 9px; height: 5px; }

.desktop { display: flex; height: 100vh; }
.screen { flex: 1; min-width: 0; display: flex; flex-direction: column; }
.window { flex: 1; min-height: 0; display: flex; flex-direction: column; }

/* Browser chrome */
.tabstrip, .navwrap { background: #d3e3fd; }
.tabstrip { display: flex; align-items: center; height: 40px; flex: none; padding: 0 0 0 6px; }
.tabstrip-idle { background: #dee1e9; }
.tab-search { width: 28px; height: 28px; margin-right: 6px; border-radius: 10px; background: #eaf1fe; justify-content: center; color: #1f1f1f; }
.tab-search .i12 { width: 16px; height: 16px; }
.tabstrip-idle .tab-search { background: #fff; }
.tab { position: relative; display: flex; align-items: center; gap: 8px; align-self: flex-end; width: 232px; height: 34px; padding: 0 8px; font-size: 11px; color: #45474a; }
.tab-title { flex: 1; min-width: 0; overflow: hidden; white-space: nowrap; mask-image: linear-gradient(90deg, #000 88%, transparent); }
.tab-x { width: 16px; justify-content: center; }
.tab-active { background: #fff; border-radius: 10px 10px 0 0; color: #1f1f1f; }
.tab-active::before, .tab-active::after { content: ""; position: absolute; bottom: 0; width: 10px; height: 10px; }
.tab-active::before { left: -10px; background: radial-gradient(circle at 0 0, transparent 10px, #fff 10px); }
.tab-active::after { right: -10px; background: radial-gradient(circle at 100% 0, transparent 10px, #fff 10px); }
.tab-gap { width: 6px; height: 16px; }
.tab-sep { border-left: 2px solid #a8c7fa; margin-left: 2px; width: 4px; }
.tab-new { width: 28px; justify-content: center; margin-left: 6px; color: #45474a; }
.tab-gap + .tab-new { margin-left: 0; }
.win-ctl { display: flex; gap: 36px; margin-left: auto; padding-right: 18px; color: #000; }
.win-ctl svg { width: 10px; height: 10px; }
.win-ctl-idle { color: #8a8d91; }
.gfav { display: flex; width: 16px; height: 16px; border-radius: 8px; background: #fff; justify-content: center; align-items: center; }
.gfav svg { width: 12px; height: 12px; }
.navbar { display: flex; align-items: center; height: 48px; padding: 0 6px 1px 4px; background: #fff; border-bottom: 1px solid #dfe1dd; border-radius: 8px 8px 0 0; }
.nav-btn { width: 36px; justify-content: center; color: #45474a; }
.nav-off { color: #b0b2b5; }
.omnibox { flex: 1; display: flex; align-items: center; gap: 14px; height: 34px; margin: 0 17px 0 8px; padding: 0 14px 0 4px; border-radius: 17px; background: #ecf0fa; color: #45474a; }
.site { display: flex; align-items: center; justify-content: center; width: 26px; height: 26px; margin-right: -7px; border-radius: 13px; background: #fff; }
.url { flex: 1; font-size: 13px; color: #1f1f1f; }
.dim { color: #55585c; }
.avatar-s { width: 20px; height: 20px; border-radius: 10px; margin-right: 12px; background: #2f6b1c; color: #fff; text-align: center; font: 11px/20px Roboto, sans-serif; }
.update { width: 159px; height: 34px; border-radius: 17px; justify-content: space-between; padding: 0 7px 0 13px; background: #d3e3fd; color: #041e49; font-size: 11px; white-space: nowrap; }

/* Document editor */
.docs { flex: 1; min-height: 0; display: flex; flex-direction: column; background: #f9fbfd; font-family: Roboto, sans-serif; color: #444746; }
.docs-head { display: flex; height: 70px; flex: none; padding: 10px 21px 0 24px; }
.docs-logo { width: 28px; height: 38px; margin: 6px 15px 0 0; }
.docs-titles { flex: 1; }
.docs-title { display: flex; align-items: center; height: 28px; gap: 15px; font-size: 20px; color: #1f1f1f; }
.docs-title span { margin-right: 6px; }
.docs-title svg { color: #444746; }
.docs-menu { display: flex; gap: 18px; height: 24px; font-size: 15px; color: #1f1f1f; }
.docs-actions { display: flex; align-items: center; height: 44px; }
.docs-actions > button { width: 54px; justify-content: center; }
.docs-actions > .meet { width: 79px; gap: 9px; padding-left: 6px; }
.share { display: flex; width: 137px; height: 44px; border-radius: 22px; overflow: hidden; background: #c2e7ff; color: #001d35; margin: 0 22px 0 10px; }
.share-main { flex: 1; gap: 9px; padding-left: 18px; font-size: 16px; font-weight: 500; border-right: 1px solid #fff; }
.share-more { width: 36px; justify-content: center; }
.avatar-l { width: 36px; height: 36px; border-radius: 18px; background: #f4511e; color: #fff; text-align: center; font-size: 20px; line-height: 36px; }
.tools { display: flex; align-items: center; height: 44px; flex: none; margin: 0 18px; padding: 0 14px 0 10px; border-radius: 22px; background: #f0f4f9; font-size: 16px; }
.menus { width: 110px; height: 31px; border-radius: 16px; gap: 10px; padding-left: 9px; background: #fff; }
.tool { width: 35px; height: 31px; justify-content: center; }
.tool svg { width: 19px; height: 19px; fill: currentColor; }
.tool .i16 { width: 16px; height: 16px; }
.tool .caret, .pick .caret { width: 9px; height: 5px; }
.drop { width: 48px; gap: 5px; padding-left: 7px; justify-content: flex-start; }
.pick { height: 31px; justify-content: space-between; }
.pick-zoom { width: 89px; padding: 0 14px 0 10px; }
.pick-style { width: 142px; padding: 0 15px 0 16px; }
.pick-font { width: 115px; padding: 0 15px 0 17px; }
.sep { width: 1px; height: 22px; background: #c7c9cb; }
.size { width: 35px; height: 26px; border: 1px solid #747775; border-radius: 4px; text-align: center; }
.group { display: flex; padding: 0 6px 0 3px; }
.t-b { font-weight: 700; font-size: 18px; }
.t-i { font: italic 700 19px "Liberation Serif", serif; }
.t-u { font-weight: 500; font-size: 17px; text-decoration: underline; }
.t-a { font-size: 17px; padding-bottom: 4px; }
.t-pen svg { border-bottom: 3px solid #fff; height: 22px; width: 24px; }
.editing { width: 164px; height: 32px; margin: 0 10px 0 auto; padding: 0 18px 0 13px; border-radius: 16px; background: #edf2fb; gap: 11px; }
.editing span { flex: 1; text-align: left; }
.ruler { height: 27px; flex: none; padding: 8px 0 0 484px; }
.ruler-scale { width: 912px; height: 19px; }
.ruler-num { font: 12px Roboto, sans-serif; fill: #5f6368; text-anchor: middle; }
.canvas { flex: 1; min-height: 0; display: flex; margin-left: 17px; border-top: 1px solid #c0c2c4; border-left: 1px solid #c7c9cb; }
.outline { width: 472px; flex: none; padding: 20px 0 0 17px; font-size: 16px; }
.outline-back { width: 38px; height: 22px; justify-content: center; }
.outline-head { display: flex; align-items: center; justify-content: space-between; width: 240px; height: 24px; margin: 33px 0 16px 14px; }
.outline-tab { display: flex; align-items: center; gap: 11px; width: 274px; height: 44px; padding: 0 22px 0 21px; border-radius: 22px; background: #d3e3fd; color: #041e49; font-weight: 500; }
.outline-tab span { flex: 1; }
.outline p { width: 250px; margin: 9px 0 0 9px; font-size: 15px; font-style: italic; line-height: 19px; color: #5f6368; }
.page { width: 900px; flex: none; padding: 94px 0 0 105px; border: solid #c7c9cb; border-width: 0 1px; background: #fff; color: #1f1f1f; }
.page-text { font-size: 15px; line-height: 20px; }
.shot { width: 682px; margin: 25px 0 0 2px; padding: 0 2px 9px; background: #acacac; }
.shot-top { display: flex; align-items: flex-end; height: 9px; overflow: hidden; color: #444; font-size: 20px; line-height: 22px; }
.pw { display: flow-root; height: 566px; border-radius: 36px; background: #e8edf6; padding: 28px 29px 0; color: #4a4d50; font-size: 17px; line-height: 24px; }
.pw h2 { font-size: 30px; line-height: 40px; color: #1f1f1f; }
.pw h3 { font-size: 18px; font-weight: 600; margin-top: 19px; line-height: 24px; }
.pw-box { height: 151px; margin-bottom: 28px; border-radius: 9px; background: #f8faff; color: #1f1f1f; font-size: 27px; font-weight: 700; line-height: 150px; text-align: center; }
.pw-box + h3 { margin-top: 0; }
.pw-done { width: 100px; height: 49px; margin: 28px 0 0 auto; border-radius: 25px; justify-content: center; background: #0b57d0; color: #fff; font-size: 18px; font-weight: 500; }
.side-scroll { flex: 1; display: flex; flex-direction: column; align-items: flex-end; justify-content: space-between; padding: 86px 0 9px; }
.side-thumb { width: 8px; height: 48px; margin-right: 5px; border-radius: 4px; background: #dadce0; }
.side-toggle { width: 26px; height: 44px; border-radius: 22px 0 0 22px; background: #fff; box-shadow: 0 1px 3px #8888; justify-content: center; padding-left: 4px; }

/* Taskbar */
.taskbar { display: flex; align-items: stretch; height: 40px; flex: none; background: linear-gradient(90deg, #382f26, #3b3329 38%, #242424 40%, #242424 45%, #3b3029 47%, #3b3328); color: #fff; }
.start { width: 48px; padding-left: 16px; }
.tsearch { display: flex; align-items: center; width: 288px; margin-right: 3px; padding: 0 3px 0 9px; border: 1px solid #bbb; background: #f1f1f1; color: #222; font-size: 14px; }
.flip { transform: scaleX(-1); color: #111; }
.tsearch input { flex: 1; min-width: 0; padding-left: 9px; }
.tsearch input::placeholder { color: #333; opacity: 1; }
.coats { display: flex; gap: 1px; }
.coats svg { width: 17px; height: 27px; }
.c1 { color: #d9ab12; } .c2 { color: #f0256e; } .c3 { color: #1f93a8; } .c4 { color: #e8551b; }
.app { width: 48px; justify-content: center; }
.app-on { background: #645c54; border-bottom: 2px solid #76b9ed; }
.app-run { background: linear-gradient(#76b9ed, #76b9ed) 50% 100% / 40px 2px no-repeat; }
.tray { display: flex; align-items: center; margin-left: auto; }
.tclock { display: flex; flex-direction: column; width: 70px; align-items: center; font-size: 11px; line-height: 17px; }
.weather { display: flex; align-items: center; gap: 8px; margin-right: 20px; font-size: 14px; }
.tico { width: 16px; height: 16px; margin-right: 8px; fill: none; stroke: #fff; }
.tico + .tclock { margin-left: -3px; }
.notify { position: relative; align-self: stretch; width: 40px; margin-right: 12px; justify-content: center; background: #4a4138; }
.notify span { position: absolute; right: 5px; bottom: 4px; width: 16px; height: 16px; border-radius: 8px; border: 1px solid #999; background: #333; font-size: 11px; line-height: 14px; text-align: center; }

/* Dashboard app */
.viewport { position: relative; flex: 1; min-height: 0; display: flex; overflow: hidden; background: #f8fafc; }
.site-body { flex: 1; min-width: 0; }
.banner { position: relative; display: flex; align-items: center; justify-content: space-between; height: 40px; padding: 0 21px 0 14px; background: #004182; color: #f0f5fb; font-size: 12px; box-shadow: 0 2px 8px #0003; }
.banner a { color: #fff; font-weight: 600; }
.viewport svg { fill: none; stroke: currentColor; stroke-width: 2; stroke-linecap: round; stroke-linejoin: round; }
.viewport .caret { fill: currentColor; stroke: none; }
.top { height: 65px; background: #fff; border-bottom: 1px solid #e2e8f0; }
.top-in { display: flex; align-items: center; max-width: 1152px; height: 64px; margin: 0 auto; }
.brand { display: flex; align-items: center; gap: 3px; width: 74px; height: 36px; padding-left: 6px; background: #fefcfb; }
.brand-cube { width: 16px; height: 20px; margin-bottom: 3px; }
.brand-text { display: flex; flex-direction: column; color: #17406d; }
.brand-text b { font-size: 14px; line-height: 14px; }
.brand-text small { font-size: 6px; line-height: 8px; color: #3b8fd6; }
.top h1 { flex: 1; margin-left: 12px; font-size: 18px; font-weight: 600; }
.ghost { width: 36px; justify-content: center; }
.ghost-help { margin-right: 15px; color: #475569; }
.ghost-gear { margin: 0 14px; }
.logout { width: 98px; height: 36px; border-radius: 6px; gap: 15px; padding-left: 14px; background: #dc2626; color: #fff; font-weight: 600; }
.who { display: flex; flex-direction: column; align-items: flex-end; min-width: 148px; font-weight: 500; line-height: 16px; }
.who small { font-size: 10px; font-weight: 400; color: #64748b; line-height: 14px; }
.who-pic { display: flex; align-items: center; justify-content: center; width: 36px; height: 36px; margin-left: 11px; border-radius: 18px; background: #f5f5f4; }
.cols { display: flex; align-items: flex-start; }
.side { width: 230px; flex: none; padding: 22px 14px; background: #fff; border-right: 1px solid #e2e8f0; color: #475569; }
.side nav { padding-bottom: 28px; border-bottom: 1px solid #cfd9e6; }
.side a { display: flex; align-items: center; gap: 11px; height: 36px; padding-left: 11px; color: inherit; text-decoration: none; font-size: 14px; font-weight: 500; }
.side .on { color: #0c0a09; }
.pill { height: 20px; padding: 0 9px; border-radius: 10px; background: #f5f5f4; color: #1c1917; font-size: 11px; line-height: 20px; }
.quick h2 { padding: 20px 0 10px; font-size: 11px; line-height: 18px; color: #64748b; font-weight: 500; }
.quick button { height: 32px; gap: 15px; padding-left: 11px; font-weight: 500; }
.quick button:disabled { opacity: .3; }
.main { flex: 1; min-width: 0; padding: 22px 0 0 3px; }
.main-in { max-width: 1154px; margin: 0 auto; }
.page-head { display: flex; align-items: center; height: 54px; margin-bottom: 21px; }
.page-head div { flex: 1; }
.page-head h2 { font-size: 20px; font-weight: 700; line-height: 32px; color: #0f172a; }
.page-head p { font-size: 13px; line-height: 22px; color: #475569; }
.btn { height: 36px; padding: 0 14px; gap: 14px; justify-content: center; border: 1px solid #e7e5e4; border-radius: 6px; background: #fff; font-weight: 500; }
.btn-primary { border-color: #2196f3; background: #2196f3; color: #fff; margin-left: 11px; font-weight: 600; }
.card { background: #fff; border: 1px solid #e4e4e4; border-radius: 7px; box-shadow: 0 1px 2px #0001; }
.stats { display: grid; grid-template-columns: repeat(4, 1fr); gap: 15px; margin-bottom: 23px; }
.stat { display: flex; align-items: center; justify-content: space-between; height: 95px; padding: 0 22px; }
.stat div { display: flex; flex-direction: column; }
.stat span { font-weight: 500; line-height: 18px; color: #475569; }
.stat b { font-size: 22px; line-height: 36px; color: #0f172a; }
.ic { display: flex; align-items: center; justify-content: center; width: 43px; height: 43px; border-radius: 8px; }
.blue { background: #eff6ff; color: #2563eb; }
.emerald { background: #ecfdf5; color: #059669; }
.purple { background: #faf5ff; color: #9333ea; }
.green { background: #f0fdf4; color: #16a34a; }
.perf { padding: 20px 22px 21px; margin-bottom: 22px; }
.perf h3 { display: flex; align-items: center; gap: 6px; font-size: 19px; line-height: 24px; font-weight: 600; }
.metrics { display: grid; grid-template-columns: repeat(3, 1fr); column-gap: 22px; padding: 20px 0; border-bottom: 1px solid #e2e8f0; }
.metrics span { display: flex; align-items: center; gap: 4px; line-height: 18px; color: #475569; }
.metrics b { display: block; margin-top: 8px; font-size: 22px; line-height: 30px; color: #0f172a; }
.metrics .pos { color: #16a34a; }
.active-f h4 { margin: 14px 0 11px; line-height: 18px; font-weight: 500; color: #334155; }
.frow { display: flex; align-items: center; justify-content: space-between; height: 47px; padding: 0 7px; border-radius: 6px; background: #f8fafc; }
.frow b { display: block; font-weight: 600; line-height: 17px; }
.frow small { display: block; font-size: 10px; line-height: 14px; color: #475569; }
.tagpill { height: 20px; padding: 0 9px; border: 1px solid #e7e5e4; border-radius: 10px; font-size: 10px; font-weight: 600; line-height: 18px; color: #0c0a09; }
.lower { display: grid; grid-template-columns: repeat(3, 1fr); gap: 23px; }
.recent { grid-column: span 2; padding: 19px 21px; }
.recent header { display: flex; justify-content: space-between; line-height: 28px; margin-bottom: 19px; }
.recent header span { color: #475569; }
.recent h3 { font-size: 19px; font-weight: 600; }
.recent ul { display: flex; flex-direction: column; gap: 10px; }
.recent li { display: flex; gap: 11px; height: 60px; padding: 11px; border: 1px solid #e2e8f0; border-radius: 7px; }
.recent li div { display: flex; flex-direction: column; }
.recent li span { line-height: 18px; color: #0f172a; }
.recent small { margin-top: 3px; font-size: 10px; line-height: 14px; color: #64748b; }
.clk { display: flex; align-items: center; justify-content: center; width: 29px; height: 29px; border-radius: 7px; background: #f1f5f9; }
.k-blue { color: #2563eb; } .k-red { color: #dc2626; } .k-green { color: #16a34a; }
.log { padding: 22px 21px; }
.log h3 { font-size: 15px; font-weight: 600; line-height: 26px; margin-bottom: 11px; }
.log li { display: flex; flex-direction: column; padding: 18px 0 8px; border-bottom: 1px solid #f1f5f9; }
.log b { font-weight: 600; line-height: 18px; color: #0f172a; }
.log small { font-size: 10px; line-height: 14px; color: #64748b; }
.scroll { display: flex; flex-direction: column; align-items: center; width: 15px; padding: 6px 0; background: #fafafa; color: #8b8b8b; }
.caret-up { transform: rotate(180deg); }
.scroll-thumb { width: 9px; height: 443px; margin: 6px 0 auto; border-radius: 5px; background: #8b8b8b; }

/* Support chat */
.chat { position: absolute; right: 38px; bottom: 23px; width: 286px; height: 381px; padding: 21px 20px 0 21px; border: 1px solid #e7e5e4; border-radius: 8px; background: #fff; box-shadow: 0 10px 20px #0002; }
.chat-head { display: flex; align-items: center; justify-content: space-between; height: 45px; }
.chat-head h3 { font-size: 12px; font-weight: 600; line-height: 18px; }
.chat-head p { display: flex; align-items: center; gap: 7px; margin-top: 3px; font-size: 11px; color: #64748b; }
.hours { font-size: 11px; font-weight: 500; }
.dot { width: 7px; height: 7px; border-radius: 4px; background: #22c55e; }
.chat-x { width: 22px; height: 24px; justify-content: center; }
.chat-msg { height: 76px; margin: 8px 0 14px; padding: 11px 10px; border-radius: 6px; background: #f8fafc; line-height: 18px; color: #334155; }
.chat-row { display: grid; grid-template-columns: 1fr 1fr; gap: 7px; }
.field { width: 100%; height: 36px; padding: 2px 11px 0; border: 1px solid #e7e5e4; border-radius: 6px; background: #fff; font-size: 12px; }
.email { position: relative; }
.field-on { box-shadow: 0 0 0 2px #fff, 0 0 0 4px #0c0a09; }
.text-caret { position: absolute; left: 40px; top: 10px; width: 1px; height: 17px; background: #000; }
.area { display: block; height: 72px; margin: 11px 0; padding: 8px 11px; resize: none; line-height: 18px; }
.chat-send { width: 100%; margin: 0; }
.chat-foot { margin-top: 13px; font-size: 10px; line-height: 16px; text-align: center; color: #64748b; }
.chat-foot a { color: #2563eb; text-decoration: none; }
.tip { position: absolute; right: -59px; top: 43px; z-index: 2; display: flex; gap: 8px; width: 235px; height: 57px; padding: 8px 7px; border: 1px solid #767676; border-radius: 3px; background: #fff; box-shadow: 2px 3px 5px #0005; white-space: nowrap; }
.tip .tip-arrow { position: absolute; left: 56px; top: -9px; width: 16px; height: 9px; stroke-width: 1; }
.tip-ico { width: 21px; height: 21px; border-radius: 2px; background: #ff8c00; color: #fff; font-size: 17px; font-weight: 800; line-height: 20px; text-align: center; }
.tip p { margin-top: 3px; line-height: 17px; }
```
